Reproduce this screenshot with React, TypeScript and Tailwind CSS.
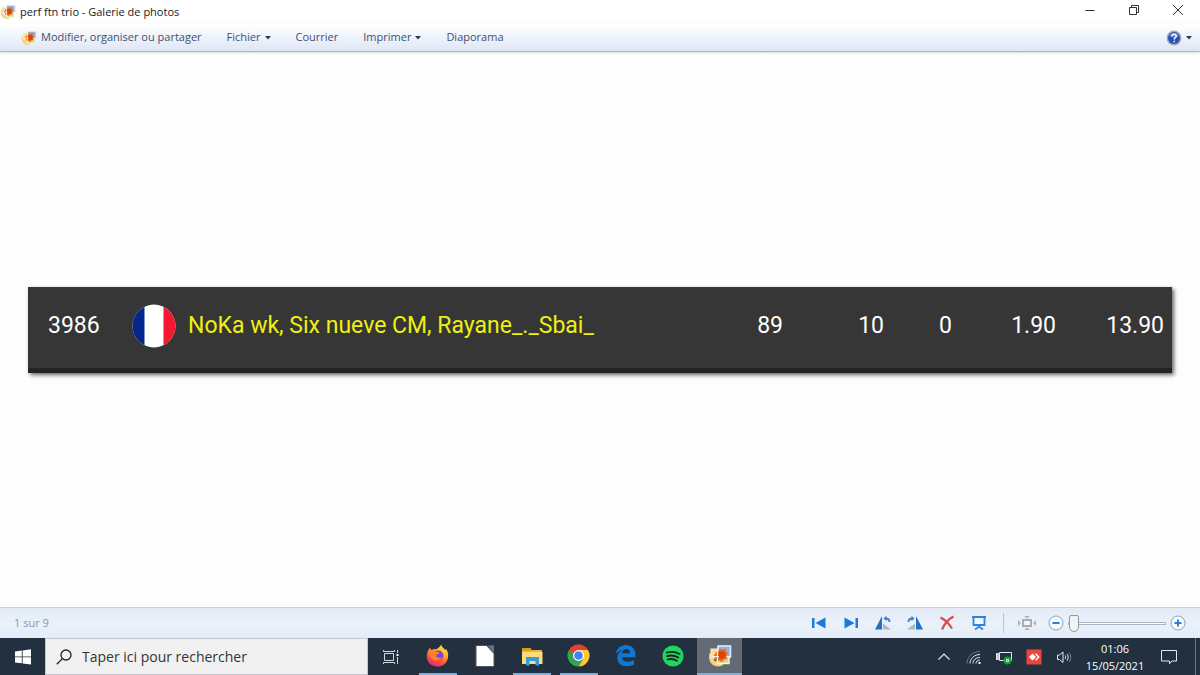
import { useState } from "react";
import type { ReactNode } from "react";
import clsx from "clsx";

type Player = {
  rank: number;
  names: string;
  stats: string[];
};

const players: Player[] = [
  {
    rank: 3986,
    names: "NoKa wk, Six nueve CM, Rayane_._Sbai_",
    stats: ["89", "10", "0", "1.90", "13.90"]
  }
];

function GalleryIcon({ className }: { className?: string }) {
  return (
    <svg viewBox="0 0 24 24" className={className} aria-hidden="true">
      <path d="M1.500 9c-2 8 2 13 9 13.500 3 0 4-1 5-2.500l-4-1c-4 0-7-3-6-9z" fill="#f5cf7c" />
      <rect x="3" y="5" width="8" height="9" fill="#fbdc9a" stroke="#f8ecd0" />
      <rect x="10" y="2" width="12.500" height="11" fill="#8fb4df" stroke="#dce9f7" strokeWidth="1.600" />
      <rect x="9" y="12.500" width="12" height="7" fill="#c9db93" stroke="#f4f7e2" strokeWidth="1.400" />
      <path
        d="M8 8l2.500-1L11.500 4.500l3 1 3-1 .5 3 2 2-1.500 2.500.5 3-3 .5-2 2.500-3-1.500-3 .5-.5-3-2-2 1.500-2z"
        fill="#ee6a18"
      />
      <path d="M11.500 7.500h5l1 4-2 3.500-4-.5-1.500-3z" fill="#d9440f" />
      <path d="M9.500 5v13M4 12.500h7" stroke="#fff3df" strokeWidth="1.200" />
    </svg>
  );
}

function Caret() {
  return (
    <svg viewBox="0 0 6 4" className="h-1 w-1.5" aria-hidden="true">
      <path d="M0 0h6L3 3.500z" fill="#2d3b57" />
    </svg>
  );
}

function MenuButton({ label, caret = false }: { label: string; caret?: boolean }) {
  return (
    <button type="button" className="flex items-center gap-1 whitespace-nowrap">
      {label}
      {caret ? <Caret /> : null}
    </button>
  );
}

function TitleBar() {
  return (
    <header className="flex h-6 items-center justify-between bg-white text-[#1a1a1a]">
      <div className="flex items-center gap-1">
        <GalleryIcon className="h-4 w-4" />
        <h1 className="text-[11px] leading-6">perf ftn trio - Galerie de photos</h1>
      </div>
      <div className="flex pb-1">
        <button type="button" aria-label="Réduire" className="grid h-5 w-11 place-items-center">
          <svg viewBox="0 0 12 12" className="h-3 w-3" fill="none" stroke="#333">
            <path d="M1.500 6.500h9" />
          </svg>
        </button>
        <button type="button" aria-label="Restaurer" className="grid h-5 w-11 place-items-center">
          <svg viewBox="0 0 12 12" className="h-3 w-3" fill="none" stroke="#333">
            <path d="M1.500 3.500h7v7h-7zM3.500 3.500v-2h7v7h-2" />
          </svg>
        </button>
        <button type="button" aria-label="Fermer" className="grid h-5 w-11 place-items-center">
          <svg viewBox="0 0 12 12" className="h-3 w-3" fill="none" stroke="#333">
            <path d="M1 1l10 10M11 1L1 11" />
          </svg>
        </button>
      </div>
    </header>
  );
}

function Toolbar() {
  return (
    <nav
      aria-label="Galerie de photos"
      className="flex h-7 items-center justify-between border-b border-[#a9b7cc] bg-linear-to-b from-white via-[#eef3fb] to-[#dfe7f4] pr-2 pl-[21px] text-[11px] text-[#3f4f70] shadow-sm"
    >
      <div className="flex items-center gap-[25px]">
        <button type="button" className="flex items-center gap-1 whitespace-nowrap">
          <GalleryIcon className="h-4 w-4" />
          Modifier, organiser ou partager
        </button>
        <MenuButton label="Fichier" caret />
        <MenuButton label="Courrier" />
        <MenuButton label="Imprimer" caret />
        <MenuButton label="Diaporama" />
      </div>
      <button type="button" aria-label="Aide" className="flex items-center gap-1">
        <svg viewBox="0 0 16 16" className="h-4 w-4" aria-hidden="true">
          <circle cx="8" cy="8" r="7.500" fill="#a9acb4" />
          <circle cx="8" cy="8" r="6" fill="#2850b8" />
          <path d="M3 6a5.500 5.500 0 0 1 10 0c-3 2-7 2-10 0z" fill="#5b80d8" />
          <path
            d="M6 6.300c0-2.600 4.200-2.600 4.200 0 0 1.500-2 1.500-2 3.200M8.200 10.800v1.500"
            fill="none"
            stroke="#fff"
            strokeWidth="1.500"
          />
        </svg>
        <Caret />
      </button>
    </nav>
  );
}

function FrenchFlag() {
  return (
    <svg viewBox="0 0 44 44" className="h-11 w-11 shrink-0" role="img" aria-label="France">
      <clipPath id="flag-circle">
        <circle cx="22" cy="22" r="21.500" />
      </clipPath>
      <g clipPath="url(#flag-circle)">
        <path d="M0 0h44v44H0z" fill="#fff" />
        <path d="M0 0h12.500v44H0z" fill="#05268c" />
        <path d="M31.500 0H44v44H31.500z" fill="#f6182f" />
      </g>
    </svg>
  );
}

function Photo() {
  return (
    <table className="w-full table-fixed border-separate border-spacing-0 border-b-5 border-[#242424] bg-[#363636] font-[Roboto,sans-serif] text-[23px] leading-7 text-white shadow-[2px_2px_4px_rgba(0,0,0,0.6)]">
      <colgroup>
        <col className="w-[104px]" />
        <col />
        <col className="w-[101px]" />
        <col className="w-[101px]" />
        <col className="w-[68px]" />
        <col className="w-[104px]" />
        <col className="w-[108px]" />
      </colgroup>
      <tbody>
        {players.map((player) => (
          <tr key={player.rank} className="[&>td]:pt-[17px] [&>td]:pb-5">
            <td className="pl-5">{player.rank}</td>
            <td>
              <div className="flex items-center gap-3 whitespace-nowrap text-[#f0f00f]">
                <FrenchFlag />
                {player.names}
              </div>
            </td>
            {player.stats.map((stat, index) => (
              <td key={index} className="pr-2 text-right">
                {stat}
              </td>
            ))}
          </tr>
        ))}
      </tbody>
    </table>
  );
}

function StatusButton({ label, children }: { label: string; children: ReactNode }) {
  return (
    <button type="button" aria-label={label} className="grid h-7 w-8 place-items-center">
      <svg viewBox="0 0 16 16" className="h-4 w-4" fill="none" aria-hidden="true">
        {children}
      </svg>
    </button>
  );
}

function ZoomButton({ label, path, onClick }: { label: string; path: string; onClick: () => void }) {
  return (
    <button type="button" aria-label={label} onClick={onClick} className="grid h-7 w-4 place-items-center">
      <svg viewBox="0 0 16 16" className="h-4 w-4" aria-hidden="true">
        <circle cx="8" cy="8" r="7" fill="#f7fbff" stroke="#8d9fb9" />
        <path d={path} stroke="#2d7dd2" strokeWidth="2" />
      </svg>
    </button>
  );
}

function StatusBar() {
  const [zoom, setZoom] = useState(0);

  return (
    <section
      aria-label="Commandes"
      className="flex h-[31px] items-center justify-between border-t border-[#c9d3e0] bg-linear-to-b from-[#e3ebf6] via-[#eaf1fa] to-[#e3ecf8] px-3.5"
    >
      <p className="text-[11px] text-[#7f98bd]">1 sur 9</p>
      <div className="flex items-center">
        <StatusButton label="Précédent">
          <path d="M1 3h2.500v10H1zM14.500 2.500v11L4.500 8z" fill="#1c78dc" />
        </StatusButton>
        <StatusButton label="Suivant">
          <path d="M12.500 3H15v10h-2.500zM1.500 2.500v11l10-5.500z" fill="#1c78dc" />
        </StatusButton>
        <StatusButton label="Faire pivoter à gauche">
          <path d="M7 1v13.500H0z" fill="#1f72c8" />
          <path d="M8 8.500v6h8z" fill="#b4b7bb" />
          <path d="M14.500 7c0-2.500-1.500-3.500-4-3.500" stroke="#3b7fce" strokeWidth="1.800" />
          <path d="M11.500 .8v5.400L8.500 3.500z" fill="#3b7fce" />
        </StatusButton>
        <StatusButton label="Faire pivoter à droite">
          <path d="M9 1v13.500h7z" fill="#1f72c8" />
          <path d="M8 8.500v6H0z" fill="#b4b7bb" />
          <path d="M1.500 7c0-2.500 1.500-3.500 4-3.500" stroke="#3b7fce" strokeWidth="1.800" />
          <path d="M4.500 .8v5.400l3-2.700z" fill="#3b7fce" />
        </StatusButton>
        <StatusButton label="Supprimer">
          <path d="M1.500 2.500c4 2 8.500 6 11.500 11M14.500 1.500C9.500 4 5.500 9 3 14.500" stroke="#d9484c" strokeWidth="2.200" />
        </StatusButton>
        <StatusButton label="Diaporama">
          <path d="M1 2h14M2.500 2v8h11V2M8 10v2M4 14.500l4-3 4 3" stroke="#2b85dd" strokeWidth="1.800" />
          <path d="M4 3.500h8V9H4z" fill="#eef6ff" />
        </StatusButton>
        <div className="ml-2 h-5 border-l border-[#b9c3d1]" />
        <button type="button" aria-label="Ajuster à la fenêtre" className="ml-3.5 grid h-7 w-[18px] place-items-center">
          <svg viewBox="0 0 18 16" className="h-4 w-[18px]" aria-hidden="true">
            <path d="M5 5h8v6H5z" fill="#f4f6f9" stroke="#a7adb7" strokeWidth="2" />
            <path d="M6 1h6L9 3.500zM6 15h6l-3-2.500zM0 5v6l3-3zM18 5v6l-3-3z" fill="#adb2bb" />
          </svg>
        </button>
        <div className="ml-3 flex items-center gap-1">
          <ZoomButton label="Zoom arrière" path="M4.500 8h7" onClick={() => setZoom(Math.max(0, zoom - 10))} />
          <input
            type="range"
            aria-label="Zoom"
            min={0}
            max={100}
            value={zoom}
            onChange={(event) => setZoom(Number(event.target.value))}
            className="h-5 w-[98px] appearance-none bg-transparent [&::-webkit-slider-runnable-track]:h-[3px] [&::-webkit-slider-runnable-track]:border [&::-webkit-slider-runnable-track]:border-[#a8b3c4] [&::-webkit-slider-runnable-track]:bg-white [&::-webkit-slider-thumb]:-mt-2 [&::-webkit-slider-thumb]:h-[17px] [&::-webkit-slider-thumb]:w-2.5 [&::-webkit-slider-thumb]:appearance-none [&::-webkit-slider-thumb]:rounded-t-xs [&::-webkit-slider-thumb]:rounded-b-[5px] [&::-webkit-slider-thumb]:border [&::-webkit-slider-thumb]:border-[#8f98a6] [&::-webkit-slider-thumb]:bg-[#f2f3f5]"
          />
          <ZoomButton label="Zoom avant" path="M4.500 8h7M8 4.500v7" onClick={() => setZoom(Math.min(100, zoom + 10))} />
        </div>
      </div>
    </section>
  );
}

function FirefoxIcon() {
  return (
    <svg viewBox="0 0 24 24" className="h-[23px] w-[23px]" aria-hidden="true">
      <defs>
        <linearGradient id="fox" x1=".8" y1="0" x2=".3" y2="1">
          <stop offset="0" stopColor="#fff04a" />
          <stop offset=".35" stopColor="#ffb02e" />
          <stop offset=".65" stopColor="#ff5a36" />
          <stop offset="1" stopColor="#e9207c" />
        </linearGradient>
      </defs>
      <path
        d="M16 .5c0 3 3 3.500 4 6l.8-1.500c2 3 2.700 5.500 2.200 9C22 20 17.500 23.500 12 23.500 5.500 23.500.8 19 .8 13c0-4 1.500-7 3.700-9l.7 2.500C7.500 5 9 5.500 10.500 5.500 12 5 14 3.500 16 .5z"
        fill="url(#fox)"
      />
      <circle cx="12.800" cy="12" r="5.300" fill="#7542e5" />
      <path d="M4 8c3-2 6-1 7 0 1 .5 3 .3 3 1 0 1.500-3 1.500-3.500 3 .5 2.500 3.500 3 6 1-1 4-6 6-9.500 3.500C4 14.500 3 11 4 8z" fill="#ff8126" />
    </svg>
  );
}

function WriterIcon() {
  return (
    <svg viewBox="0 0 20 24" className="h-6 w-5" aria-hidden="true">
      <path d="M1 1.500h10.500l7.500 8V22.500H1z" fill="#fff" stroke="#4c5660" />
      <path d="M12.500 1.500H19v7z" fill="#6a747e" />
    </svg>
  );
}

function ExplorerIcon() {
  return (
    <svg viewBox="0 0 24 24" className="h-6 w-6" aria-hidden="true">
      <path d="M2 4h8l1.500 2H22v14H2z" fill="#e9b43a" />
      <path d="M2 8h20.500v12H2z" fill="#ffdc78" />
      <path d="M2 4h9v2.500H2z" fill="#d89a1d" />
      <path d="M6 13h13v8.500h-3.500V17h-6v4.500H6z" fill="#3a9ade" />
    </svg>
  );
}

function ChromeIcon() {
  return (
    <svg viewBox="0 0 24 24" className="h-[23px] w-[23px]" aria-hidden="true">
      <path d="M12 12L2.040 6.250A11.500 11.500 0 0 1 21.960 6.250z" fill="#e24235" />
      <path d="M2.040 6.250A11.500 11.500 0 0 0 12 23.500l5-8.500-5-3z" fill="#30a652" />
      <path d="M12 23.500A11.500 11.500 0 0 0 21.960 6.250H12l5 8.750z" fill="#fcc934" />
      <path d="M2.040 6.250L7 15l5-8.750z" fill="#e24235" />
      <path d="M2.040 6.250L7.200 15 9 12z" fill="#30a652" />
      <circle cx="12" cy="12" r="5.700" fill="#fff" />
      <circle cx="12" cy="12" r="4.500" fill="#4285f4" />
    </svg>
  );
}

function EdgeIcon() {
  return (
    <svg viewBox="0 0 24 24" className="h-[23px] w-[23px]" aria-hidden="true">
      <path
        d="M1.800 10.700C2.500 5 6.800 1 12.400 1c6 0 10 4.200 10 10v2.800H8.200c.2 3 2.800 4.700 6.200 4.700 2.400 0 4.500-.6 6.500-1.800v4.600c-2.200 1.200-4.800 1.800-7.600 1.800-6 0-9.800-3.600-9.800-8.600 0-3.700 2-6.700 5.200-8.300-3 .6-5.400 2.200-6.900 4.500zM8.300 9.700h8.500c0-2.800-1.500-4.400-4-4.400-2.400 0-4.100 1.800-4.500 4.400z"
        fill="#0e78d5"
      />
    </svg>
  );
}

function SpotifyIcon() {
  return (
    <svg viewBox="0 0 24 24" className="h-[22px] w-[22px]" aria-hidden="true">
      <circle cx="12" cy="12" r="11.500" fill="#1ed760" />
      <path
        d="M5 8.300c4.800-1.400 10-.9 14.200 1.500M5.500 12.200c4-1.200 8.500-.7 12.200 1.400M6.200 15.800c3.500-.9 7-.5 10 1.300"
        fill="none"
        stroke="#17251d"
        strokeWidth="2"
        strokeLinecap="round"
      />
    </svg>
  );
}

const apps = [
  { label: "Firefox", icon: <FirefoxIcon />, running: true },
  { label: "LibreOffice", icon: <WriterIcon />, running: false },
  { label: "Explorateur de fichiers", icon: <ExplorerIcon />, running: true },
  { label: "Google Chrome", icon: <ChromeIcon />, running: true },
  { label: "Microsoft Edge", icon: <EdgeIcon />, running: false },
  { label: "Spotify", icon: <SpotifyIcon />, running: false }
];

function TrayButton({ label, children }: { label: string; children: ReactNode }) {
  return (
    <button type="button" aria-label={label} className="grid w-[30px] place-items-center">
      <svg viewBox="0 0 16 16" className="h-4 w-4" fill="none" stroke="#e6e9ec" aria-hidden="true">
        {children}
      </svg>
    </button>
  );
}

function Taskbar() {
  return (
    <footer className="flex h-[37px] justify-between bg-[#22303f] text-white">
      <div className="flex">
        <button type="button" aria-label="Démarrer" className="grid w-[45px] place-items-center">
          <svg viewBox="0 0 16 16" className="h-4 w-4" fill="#fff" aria-hidden="true">
            <path d="M0 2.500L6.800 1.500V7.500H0zM7.600 1.400L16 .3v7.200H7.600zM0 8.300h6.800v6L0 13.400zM7.600 8.300H16v7.300l-8.400-1.200z" />
          </svg>
        </button>
        <label className="flex w-[323px] items-center gap-2.5 border border-[#c4c6c9] bg-[#f1f1f1] pl-2.5">
          <svg viewBox="0 0 16 16" className="h-4 w-4 shrink-0" fill="none" stroke="#222" strokeWidth="1.300" aria-hidden="true">
            <circle cx="10" cy="6" r="5" />
            <path d="M6.400 9.600L.8 15.200" />
          </svg>
          <input
            type="search"
            aria-label="Rechercher"
            placeholder="Taper ici pour rechercher"
            className="w-full min-w-0 bg-transparent text-[14px] leading-5 outline-none placeholder:text-[#333] placeholder:opacity-100"
          />
        </label>
        <button type="button" aria-label="Affichage des tâches" className="grid w-[46px] place-items-center">
          <svg viewBox="0 0 18 16" className="h-4 w-[18px]" fill="none" stroke="#d3d8dd" aria-hidden="true">
            <path d="M2.500 4.500h9v7h-9zM1.500 1v1.500h11V1M1.500 15v-1.500h11V15M15.500 1v3M15.500 8v7" />
            <path d="M14.500 5h2v2h-2z" fill="#fff" stroke="none" />
          </svg>
        </button>
        {apps.map((app) => (
          <button
            key={app.label}
            type="button"
            aria-label={app.label}
            className="flex w-[47px] flex-col items-center"
          >
            <span className="grid flex-1 place-items-center">{app.icon}</span>
            <span className={clsx("h-0.5 w-[38px]", app.running && "bg-[#76b0e5]")} />
          </button>
        ))}
        <button
          type="button"
          aria-label="Galerie de photos"
          className="mx-px grid w-[45px] place-items-center border-b-2 border-[#76b0e5] bg-[#626b75]"
        >
          <GalleryIcon className="h-6 w-6" />
        </button>
      </div>
      <div className="flex">
        <TrayButton label="Icônes cachées">
          <path d="M2.500 10.500L8 5l5.500 5.500" strokeWidth="1.200" />
        </TrayButton>
        <TrayButton label="Wi-Fi">
          <path d="M4 14.500C4 9.500 8.500 5.500 14 5.500M7 14.500c0-3.500 3-6 7-6M10 14.500c0-2 1.500-3.500 4-3.500" />
          <path d="M1 14.500C1 8 6.500 2.500 14 2.500" stroke="#6f7a86" />
          <path d="M12.500 13h2v2h-2z" fill="#fff" stroke="none" />
        </TrayButton>
        <TrayButton label="Batterie">
          <path d="M3.500 3.500h12v8h-12zM.5 4v7M.5 7.500h3" />
          <path d="M1 4h2v7H1z" fill="#c3c9cf" stroke="none" />
          <circle cx="11.500" cy="11.500" r="4" fill="#16a02c" stroke="none" />
          <path d="M10.500 12.500v-2h2v2z" />
        </TrayButton>
        <TrayButton label="AnyDesk">
          <path d="M.5.5h15v15H.5z" fill="#ef443b" stroke="none" />
          <path d="M3 8l3.500-3.500L10 8l-3.500 3.500z" fill="#fff" stroke="none" />
          <path d="M9.500 4.800L12.700 8l-3.200 3.200" strokeWidth="1.500" stroke="#fff" />
        </TrayButton>
        <TrayButton label="Volume">
          <path d="M1.500 6h2L7 3v10.500L3.500 10.500h-2zM9 6.500c.8 1 .8 2.500 0 3.500M11 5c1.500 1.800 1.500 4.700 0 6.500" />
          <path d="M13 3.500c2.300 2.500 2.300 7 0 9.500" stroke="#7b8590" />
        </TrayButton>
        <button type="button" className="flex w-[72px] flex-col items-center justify-center text-[11px] leading-[17px]">
          <time>01:06</time>
          <time>15/05/2021</time>
        </button>
        <button type="button" aria-label="Notifications" className="mr-2 grid w-9 place-items-center">
          <svg viewBox="0 0 16 16" className="h-4 w-4" fill="none" stroke="#e6e9ec" aria-hidden="true">
            <path d="M.5 1.500h15v10.500H11L8.500 14.800V12h-8z" />
          </svg>
        </button>
        <div className="w-[5px] border-l border-[#69737e]" />
      </div>
    </footer>
  );
}

export default function App() {
  return (
    <div className="flex min-h-screen flex-col bg-[#fdfdfd] font-['Open_Sans',sans-serif]">
      <TitleBar />
      <Toolbar />
      <main className="flex flex-1 flex-col justify-center px-7">
        <Photo />
      </main>
      <StatusBar />
      <Taskbar />
    </div>
  );
}
